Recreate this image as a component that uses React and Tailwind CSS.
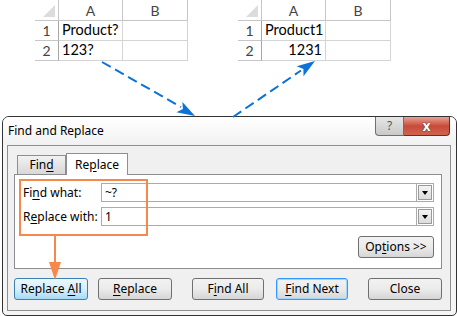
import React from 'react';

const sheetFont = { fontFamily: 'Lato, "Liberation Sans", sans-serif' };

const Sheet = ({ rows }) => (
  <div className="grid grid-cols-[24px_64px_65px] grid-rows-[21px_20px_20px] text-[14.5px] text-black" style={sheetFont}>
    <div className="relative border-r border-b border-[#c6c6c6]">
      <div className="absolute right-[3px] bottom-[3px] w-0 h-0 border-l-[12px] border-l-transparent border-b-[12px] border-b-[#dcdcdc]" />
    </div>
    <div className="border-r border-b border-[#c6c6c6] flex items-center justify-center text-[#444] text-[14px]">A</div>
    <div className="border-r border-b border-[#c6c6c6] flex items-center justify-center text-[#444] text-[14px]">B</div>
    {rows.map((r, i) => (
      <React.Fragment key={i}>
        <div className="border-r border-b border-[#c6c6c6] border-r-[#a6a6a6] flex items-center justify-center text-[#444] text-[14px]">{i + 1}</div>
        <div className={`border-r border-b border-[#d4d4d4] flex items-center px-[3px] leading-none ${r.right ? 'justify-end' : ''}`}>{r.a}</div>
        <div className="border-r border-b border-[#d4d4d4]" />
      </React.Fragment>
    ))}
  </div>
);

const U = ({ children }) => <span className="underline underline-offset-[2px]">{children}</span>;

const Btn = ({ children, className = '' }) => (
  <button className={`h-[22px] rounded-[3px] border text-[12px] leading-none text-black flex items-center justify-center ${className}`}>
    <span>{children}</span>
  </button>
);

const normal = 'border-[#707070] bg-gradient-to-b from-[#f2f2f2] via-[#ebebeb] to-[#d6d6d6]';

const Field = ({ label, value }) => (
  <div className="flex items-center h-[19px]">
    <div className="w-[78px] text-[12px] text-black">{label}</div>
    <div className="flex-1 h-full border border-[#ababab] bg-white flex items-center px-[3px] text-[12px]">{value}</div>
    <div className="w-[17px] h-full border border-l-0 border-[#ababab] bg-white flex items-center justify-center">
      <div className="w-[14px] h-[15px] border border-[#9a9a9a] bg-gradient-to-b from-[#f4f4f4] to-[#dcdcdc] flex items-center justify-center">
        <div className="w-0 h-0 border-l-[3.5px] border-r-[3.5px] border-t-[4px] border-l-transparent border-r-transparent border-t-black" />
      </div>
    </div>
  </div>
);

export default function App() {
  return (
    <div className="relative w-[457px] h-[316px] bg-white overflow-hidden" style={{ fontFamily: '"Noto Sans", "Open Sans", sans-serif' }}>
      <div className="h-[116px] flex pl-[35px] gap-[50px]">
        <Sheet rows={[{ a: 'Product?' }, { a: '123?' }]} />
        <Sheet rows={[{ a: 'Product1' }, { a: '1231', right: true }]} />
      </div>

      <div className="ml-[2px] w-[455px] h-[200px] border border-[#333] rounded-t-[7px] rounded-b-[5px] bg-[#f5f5f5] flex flex-col">
        <div className="h-[28px] flex items-start bg-gradient-to-b from-[#ffffff] to-[#f1f1f1] rounded-t-[6px]">
          <div className="pl-[5px] pt-[5px] text-[12px] text-black">Find and Replace</div>
          <div className="ml-auto mr-[6px] flex">
            <div className="w-[29px] h-[19px] border border-t-0 border-[#6f6f6f] rounded-bl-[4px] bg-gradient-to-b from-[#e6e6e6] to-[#c9c9c9] flex items-center justify-center text-[12px] text-[#555]">?</div>
            <div className="w-[46px] h-[19px] border border-t-0 border-l-0 border-[#6f2a22] rounded-br-[4px] bg-gradient-to-b from-[#e8a195] via-[#c74a38] to-[#d0634f] flex items-center justify-center text-[14px] font-bold text-white leading-none" style={{ textShadow: '0 0 1px #333, 0 0 1px #333' }}>x</div>
          </div>
        </div>

        <div className="ml-[4px] w-[444px] h-[166px] border border-[#8e8f8f] bg-[#f0f0f0] px-[6px] pt-[7px]">
          <div className="flex pl-[3px] items-end h-[21px]">
            <div className="w-[49px] h-[19px] border border-b-0 border-[#8c8e94] bg-gradient-to-b from-[#f2f2f2] to-[#d8d8d8] flex items-center justify-center text-[12px]"><span>Fin<U>d</U></span></div>
            <div className="w-[62px] h-[22px] -mb-px border border-b-0 border-[#8c8e94] bg-white flex items-center justify-center text-[12px] relative z-[1]"><span>Re<U>p</U>lace</span></div>
          </div>
          <div className="w-[428px] h-[95px] border border-[#8c8e94] bg-white pl-[8px] pr-[7px] pt-[8px] flex flex-col">
            <Field label={<>Fi<U>n</U>d what:</>} value="~?" />
            <div className="h-[5px]" />
            <Field label={<>R<U>e</U>place with:</>} value="1" />
            <div className="flex justify-end mt-[10px]">
              <Btn className={`w-[76px] h-[21px] ${normal}`}>Op<U>t</U>ions &gt;&gt;</Btn>
            </div>
          </div>
          <div className="flex mt-[9px]">
            <Btn className="w-[74px] border-[#3c7fb1] bg-gradient-to-b from-[#eaf6fd] via-[#d9f0fc] to-[#a7d9f5]">Replace <U>A</U>ll</Btn>
            <Btn className={`w-[74px] ml-[10px] ${normal}`}><U>R</U>eplace</Btn>
            <Btn className={`w-[72px] ml-[20px] ${normal}`}>F<U>i</U>nd All</Btn>
            <Btn className="w-[72px] ml-[12px] border-[#3399ff] shadow-[inset_0_0_0_1px_#9fd5ff] bg-gradient-to-b from-[#f2f2f2] via-[#ebebeb] to-[#d6d6d6]"><U>F</U>ind Next</Btn>
            <Btn className={`w-[74px] ml-[20px] ${normal}`}>Close</Btn>
          </div>
        </div>
      </div>

      <svg className="absolute inset-0 pointer-events-none" width="457" height="316" viewBox="0 0 457 316">
        <path d="M102 62 L181 107" stroke="#0b72d9" strokeWidth="2" strokeDasharray="10 5" fill="none" />
        <path d="M195 116 L176.4 112.3 L182.9 109.1 L182.4 101.9 Z" fill="#0b72d9" />
        <path d="M233 117 L301 70.5" stroke="#0b72d9" strokeWidth="2" strokeDasharray="10 5" fill="none" />
        <path d="M315 61 L303.5 76.2 L303.4 68.9 L296.7 66.2 Z" fill="#0b72d9" />
        <rect x="20" y="180" width="127" height="55" fill="none" stroke="#f5884a" strokeWidth="2" />
        <path d="M55 235 L55 266" stroke="#f5884a" strokeWidth="2" />
        <path d="M49 262 L61 262 L55 280 Z" fill="#f5884a" />
      </svg>
    </div>
  );
}
